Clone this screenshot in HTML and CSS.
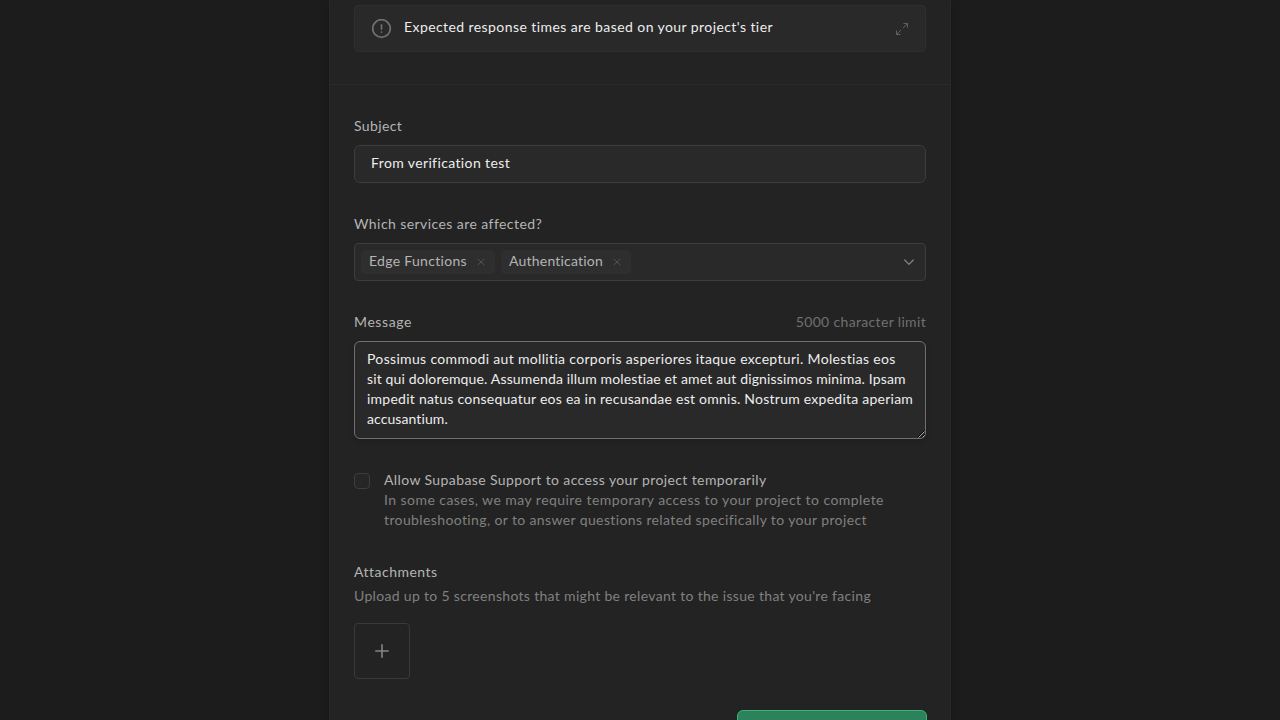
FILE: index.html
```html
<!DOCTYPE html>
<html lang="en">
<head>
<meta charset="utf-8">
<title>Support</title>
<link rel="stylesheet" href="styles.css">
</head>
<body>
<main class="panel">
  <section class="notice-section">
    <div class="notice">
      <svg class="notice-icon" width="20" height="20" viewBox="0 0 20 20" fill="none" stroke="currentColor" stroke-width="1.8" stroke-linecap="round"><circle cx="9.5" cy="9.5" r="8.8"/><path d="M9.5 5.9v4M9.5 13v.1" stroke-width="1.7"/></svg>
      <span class="notice-text">Expected response times are based on your project's tier</span>
      <svg class="expand-icon" width="14" height="14" viewBox="0 0 14 14" fill="none" stroke="currentColor"><path d="M8.5 1.5h4v4M12.5 1.5L8 6M5.5 12.5h-4v-4M1.5 12.5L6 8"/></svg>
    </div>
  </section>
  <form class="form">
    <div class="field">
      <label class="label subject-label">Subject</label>
      <div class="input"><span class="input-text">From verification test</span></div>
    </div>
    <div class="field">
      <label class="label services-label">Which services are affected?</label>
      <div class="select">
        <span class="tag tag-edge"><span class="tag-text">Edge Functions</span><svg class="close" width="8" height="8" viewBox="0 0 8 8" stroke="currentColor"><path d="M.8.8l6.4 6.4M7.2.8L.8 7.2"/></svg></span>
        <span class="tag tag-auth"><span class="tag-text">Authentication</span><svg class="close" width="8" height="8" viewBox="0 0 8 8" stroke="currentColor"><path d="M.8.8l6.4 6.4M7.2.8L.8 7.2"/></svg></span>
        <svg class="chevron" width="12" height="8" viewBox="0 0 12 8" fill="none" stroke="currentColor" stroke-width="1.2" stroke-linecap="round" stroke-linejoin="round"><path d="M1.7 2L6 6.3 10.3 2"/></svg>
      </div>
    </div>
    <div class="field">
      <div class="label-row"><label class="label message-label">Message</label><span class="label limit">5000 character limit</span></div>
      <div class="textarea">
        <span class="line line-1">Possimus commodi aut mollitia corporis asperiores itaque excepturi. Molestias eos</span>
        <span class="line line-2">sit qui doloremque. Assumenda illum molestiae et amet aut dignissimos minima. Ipsam</span>
        <span class="line line-3">impedit natus consequatur eos ea in recusandae est omnis. Nostrum expedita aperiam</span>
        <span class="line line-4">accusantium.</span>
        <svg class="grip" width="8" height="8" viewBox="0 0 8 8" fill="none"><path d="M.5 7.5l7-7M4.5 7.5l3-3" stroke="#000"/><path d="M1.5 7.5l6-6M5.5 7.5l2-2" stroke="#ccc" stroke-width=".8"/></svg>
      </div>
    </div>
    <div class="consent">
      <span class="checkbox"></span>
      <div class="consent-copy">
        <span class="line consent-title">Allow Supabase Support to access your project temporarily</span>
        <span class="line consent-1">In some cases, we may require temporary access to your project to complete</span>
        <span class="line consent-2">troubleshooting, or to answer questions related specifically to your project</span>
      </div>
    </div>
    <div class="attachments">
      <span class="line attachments-title">Attachments</span>
      <span class="line attachments-hint">Upload up to 5 screenshots that might be relevant to the issue that you're facing</span>
      <div class="upload"><svg width="14" height="14" viewBox="0 0 14 14" stroke="currentColor" stroke-width="1.6" stroke-linecap="round"><path d="M7 .8v12.4M.8 7h12.4"/></svg></div>
    </div>
    <div class="actions"><div class="submit"></div></div>
  </form>
</main>
</body>
</html>
```
FILE: styles.css
```css
* { box-sizing: border-box; }
html, body { height: 100%; }
body {
  margin: 0;
  overflow: hidden;
  display: flex;
  justify-content: center;
  background: #1c1c1c;
  color: #ededed;
  font: 14px/18px Lato, sans-serif;
  font-variant-ligatures: none;
}
svg { display: block; flex: none; }
.panel {
  width: 622px;
  height: 100%;
  overflow: hidden;
  flex: none;
  background: #232323;
  border: 1px solid #282828;
  border-width: 0 1px;
  box-shadow: 0 4px 10px rgba(0, 0, 0, .2);
}
.notice-section { height: 85px; padding: 5px 24px 0; border-bottom: 1px solid #292929; }
.notice {
  height: 47px;
  display: flex;
  align-items: center;
  padding: 0 16px 0 17px;
  border: 1px solid #2e2e2e;
  border-radius: 4px;
  background: #292929;
}
.notice-icon { color: #707070; }
.notice-text { margin-right: auto; padding: 0 0 3px 12px; letter-spacing: .42px; white-space: nowrap; }
.expand-icon { color: #606060; }
.form { padding: 32px 24px 0; }
.field { margin-bottom: 32px; }
.label { display: block; padding-bottom: 2px; color: #b4b4b4; }
.label-row { display: flex; justify-content: space-between; }
.limit { color: #707070; letter-spacing: .34px; }
.subject-label { letter-spacing: .36px; }
.services-label { letter-spacing: .43px; }
.message-label { letter-spacing: .6px; }
.input, .select {
  height: 38px;
  margin-top: 8px;
  display: flex;
  align-items: center;
  border: 1px solid #3d3d3d;
  background: #292929;
}
.input { padding: 0 16px; border-radius: 6px; }
.input-text { padding-bottom: 2px; letter-spacing: .38px; }
.select { gap: 6px; padding: 0 10px 0 6px; border-radius: 4px; }
.tag {
  height: 24px;
  display: flex;
  align-items: center;
  justify-content: space-between;
  padding: 0 10px 0 8px;
  border-radius: 4px;
  background: #2e2e2e;
  color: #b4b4b4;
}
.tag-text { padding-bottom: 2px; }
.tag-edge { width: 134px; letter-spacing: .3px; }
.tag-auth { width: 130px; letter-spacing: .21px; }
.close { color: #5a5a5a; stroke-width: .8; }
.chevron { margin-left: auto; color: #858585; }
.textarea {
  position: relative;
  height: 98px;
  margin-top: 8px;
  padding: 8px 12px;
  border: 1px solid #707070;
  border-radius: 6px;
  background: #292929;
  box-shadow: 0 2px 5px rgba(0, 0, 0, .16);
}
.line { display: block; padding-bottom: 2px; white-space: nowrap; }
.line-1 { letter-spacing: .33px; }
.line-2 { letter-spacing: .15px; }
.line-3 { letter-spacing: .245px; }
.line-4 { letter-spacing: .09px; }
.grip { position: absolute; right: 0; bottom: 0; }
.consent { display: flex; gap: 14px; }
.checkbox { width: 16px; height: 16px; margin-top: 2px; flex: none; border: 1px solid #3d3d3d; border-radius: 4px; background: #262626; }
.consent-title { color: #b4b4b4; letter-spacing: .39px; }
.consent-1, .consent-2 { color: #808080; }
.consent-1 { letter-spacing: .45px; }
.consent-2 { letter-spacing: .38px; }
.attachments { margin-top: 32px; }
.attachments-title { color: #b4b4b4; letter-spacing: .48px; }
.attachments-hint { margin-top: 4px; color: #808080; letter-spacing: .32px; }
.upload {
  width: 56px;
  height: 56px;
  margin-top: 16px;
  display: flex;
  align-items: center;
  justify-content: center;
  border: 1px solid #393939;
  border-radius: 4px;
  color: #858585;
}
.actions { display: flex; justify-content: flex-end; margin: 31px -1px 0 0; }
.submit { width: 190px; height: 38px; border: 1px solid #3bb27a; border-radius: 6px; background: #2b825b; }
```
